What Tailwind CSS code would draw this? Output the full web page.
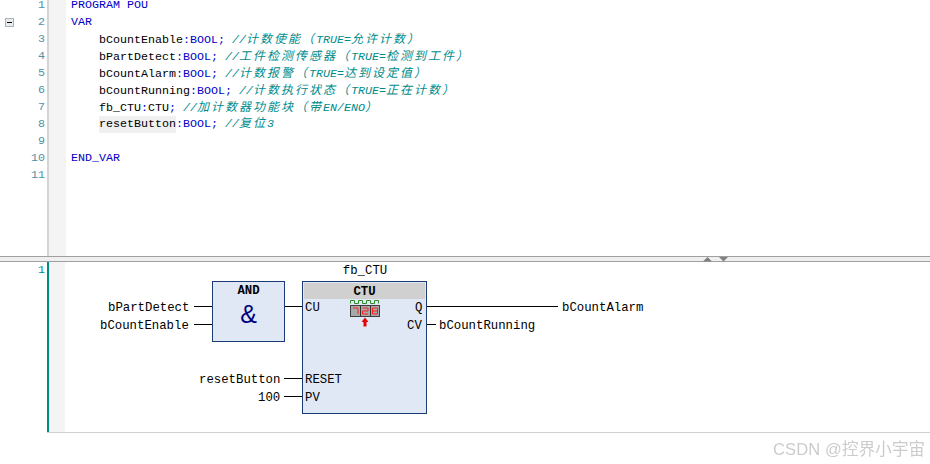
<!DOCTYPE html>
<html>
<head>
<meta charset="utf-8">
<script src="https://cdn.jsdelivr.net/npm/@tailwindcss/browser@4"></script>
</head>
<body class="bg-white">
<div class="w-[930px] h-[464px] overflow-hidden relative bg-white font-['Liberation_Mono','Noto_Sans_CJK_SC',monospace] text-[11.67px] text-black">
  <!-- Editor pane -->
  <div class="flex h-[256px] overflow-hidden">
    <div class="relative w-[47px] shrink-0">
      <div class="flex flex-col -mt-[3px] text-right pr-[2px] text-[#4f8fa8] leading-[17px]">
        <div class="h-[17px]">1</div><div class="h-[17px]">2</div><div class="h-[17px]">3</div><div class="h-[17px]">4</div><div class="h-[17px]">5</div><div class="h-[17px]">6</div><div class="h-[17px]">7</div><div class="h-[17px]">8</div><div class="h-[17px]">9</div><div class="h-[17px]">10</div><div class="h-[17px]">11</div>
      </div>
      <div class="absolute left-[5px] top-[18px] w-[9px] h-[9px] border border-[#a8b4bc] bg-[#e8ecef] flex items-center justify-center">
        <div class="w-[5px] h-[1px] bg-black"></div>
      </div>
    </div>
    <div class="w-[2px] shrink-0 bg-[#d4d4d4]"></div>
    <div class="w-[17px] shrink-0 bg-[#f4f4f4]"></div>
    <div class="flex flex-col -mt-[3px] pl-[5px] leading-[17px] whitespace-pre">
      <div class="h-[17px] text-[#0000c8]">PROGRAM POU</div>
      <div class="h-[17px] text-[#0000c8]">VAR</div>
      <div class="h-[17px] pt-px pl-[28px]">bCountEnable<span class="text-[#0000c8]">:BOOL;</span> <span class="italic text-[#008b8b]">//<span class="text-[12px] tracking-[2px]">计数使能（</span>TRUE=<span class="text-[12px] tracking-[2px]">允许计数）</span></span></div>
      <div class="h-[17px] pt-px pl-[28px]">bPartDetect<span class="text-[#0000c8]">:BOOL;</span> <span class="italic text-[#008b8b]">//<span class="text-[12px] tracking-[2px]">工件检测传感器（</span>TRUE=<span class="text-[12px] tracking-[2px]">检测到工件）</span></span></div>
      <div class="h-[17px] pt-px pl-[28px]">bCountAlarm<span class="text-[#0000c8]">:BOOL;</span> <span class="italic text-[#008b8b]">//<span class="text-[12px] tracking-[2px]">计数报警（</span>TRUE=<span class="text-[12px] tracking-[2px]">达到设定值）</span></span></div>
      <div class="h-[17px] pt-px pl-[28px]">bCountRunning<span class="text-[#0000c8]">:BOOL;</span> <span class="italic text-[#008b8b]">//<span class="text-[12px] tracking-[2px]">计数执行状态（</span>TRUE=<span class="text-[12px] tracking-[2px]">正在计数）</span></span></div>
      <div class="h-[17px] pt-px pl-[28px]">fb_CTU<span class="text-[#0000c8]">:</span>CTU<span class="text-[#0000c8]">;</span> <span class="italic text-[#008b8b]">//<span class="text-[12px] tracking-[2px]">加计数器功能块（带</span>EN/ENO<span class="text-[12px] tracking-[2px]">）</span></span></div>
      <div class="h-[17px] pl-[28px]"><span class="inline-block h-[17px] bg-[#f0f0f0]">resetButton</span><span class="text-[#0000c8]">:BOOL;</span> <span class="italic text-[#008b8b]">//<span class="text-[12px] tracking-[2px]">复位</span>3</span></div>
      <div class="h-[17px]"></div>
      <div class="h-[17px] text-[#0000c8]">END_VAR</div>
      <div class="h-[17px]"></div>
    </div>
  </div>

  <!-- Splitter -->
  <div class="relative h-[6px] bg-[#efefef] border-y border-[#a0a0a0]">
    <svg class="absolute left-[703px] top-0" width="26" height="5" viewBox="0 0 26 5">
      <path d="M0 4.5 L4.5 0 L9 4.5 Z" fill="#808080"/>
      <path d="M16 0 L25 0 L20.5 4.5 Z" fill="#808080"/>
    </svg>
  </div>

  <!-- Network pane -->
  <div class="relative h-[171px] border-b border-[#d0d0d0] ml-[47px]">
    <div class="absolute left-0 top-0 bottom-0 w-[2px] bg-[#008b80]"></div>
    <div class="absolute left-[2px] top-0 bottom-0 w-[16px] bg-[#f4f4f4]"></div>
  </div>
  <div class="absolute left-0 top-[263px] w-[47px] pr-[2px] text-right leading-[15px] text-[#008b9b]">1</div>

  <!-- FBD canvas -->
  <div class="absolute left-0 top-0 w-[930px] h-[464px] leading-[14px] text-[12.33px]">
    <!-- wires -->
    <div class="absolute left-[194px] top-[306px] w-[18px] h-px bg-black"></div>
    <div class="absolute left-[194px] top-[324px] w-[18px] h-px bg-black"></div>
    <div class="absolute left-[285px] top-[306px] w-[17px] h-px bg-black"></div>
    <div class="absolute left-[284px] top-[378px] w-[18px] h-px bg-black"></div>
    <div class="absolute left-[284px] top-[396px] w-[18px] h-px bg-black"></div>
    <div class="absolute left-[427px] top-[306px] w-[131px] h-px bg-black"></div>
    <div class="absolute left-[427px] top-[324px] w-[9px] h-px bg-black"></div>

    <!-- AND block -->
    <div class="absolute left-[212px] top-[281px] w-[73px] h-[61px] bg-[#e0e8f6] border border-[#1c3c78] flex flex-col items-center">
      <div class="font-bold mt-[2px] h-[14px]">AND</div>
      <div class="font-['Liberation_Sans',sans-serif] text-[#000080] text-[25px] leading-[30px] mt-[1px]">&amp;</div>
    </div>

    <!-- CTU block -->
    <div class="absolute left-[341px] top-[264px] w-[48px] text-center">fb_CTU</div>
    <div class="absolute left-[302px] top-[281px] w-[125px] h-[133px] bg-[#e0e8f6] border border-[#1c3c78]">
      <div class="mx-px mt-px h-[16px] bg-[#d0d0d0] text-center font-bold leading-[18px]">CTU</div>
    </div>
    <svg class="absolute left-[348px] top-[298px]" width="34" height="30" viewBox="0 0 34 30" fill="none">
      <path d="M2.5 5.5V2.5H6.5V5.5H10.5V2.5H14.5V5.5H18.5V2.5H22.5V5.5H26.5V2.5H30.5V5.5" stroke="#2f8f2f"/>
      <rect x="2.5" y="7.5" width="29" height="11" fill="#a8a8a8" stroke="#404040"/>
      <path d="M12.5 8V18M22.5 8V18" stroke="#303030"/>
      <path d="M5 10H10V16M14.5 10H20V13H14.5V16H20M24.5 10H29.5V16H24.5V10M24.5 13H29.5" stroke="#ff2020"/>
      <path d="M17 19.5L20.5 24H18.5V28.5H15.5V24H13.5Z" fill="#e80000"/>
    </svg>

    <!-- pin labels -->
    <div class="absolute left-[305px] top-[301px]">CU</div>
    <div class="absolute left-[305px] top-[373px]">RESET</div>
    <div class="absolute left-[305px] top-[391px]">PV</div>
    <div class="absolute left-[415px] top-[301px]">Q</div>
    <div class="absolute left-[407px] top-[319px]">CV</div>

    <!-- variables -->
    <div class="absolute left-[108px] top-[301px]">bPartDetect</div>
    <div class="absolute left-[100px] top-[319px]">bCountEnable</div>
    <div class="absolute left-[199px] top-[373px]">resetButton</div>
    <div class="absolute left-[258px] top-[391px]">100</div>
    <div class="absolute left-[562px] top-[301px]">bCountAlarm</div>
    <div class="absolute left-[439px] top-[319px]">bCountRunning</div>
  </div>

  <!-- Watermark -->
  <div class="absolute left-[773px] top-[438px] text-[16.5px] leading-[22px] tracking-[0.15px] text-[#cccccc] font-['Liberation_Sans','Noto_Sans_CJK_SC',sans-serif] blur-[0.3px]">CSDN @控界小宇宙</div>
</div>
</body>
</html>
